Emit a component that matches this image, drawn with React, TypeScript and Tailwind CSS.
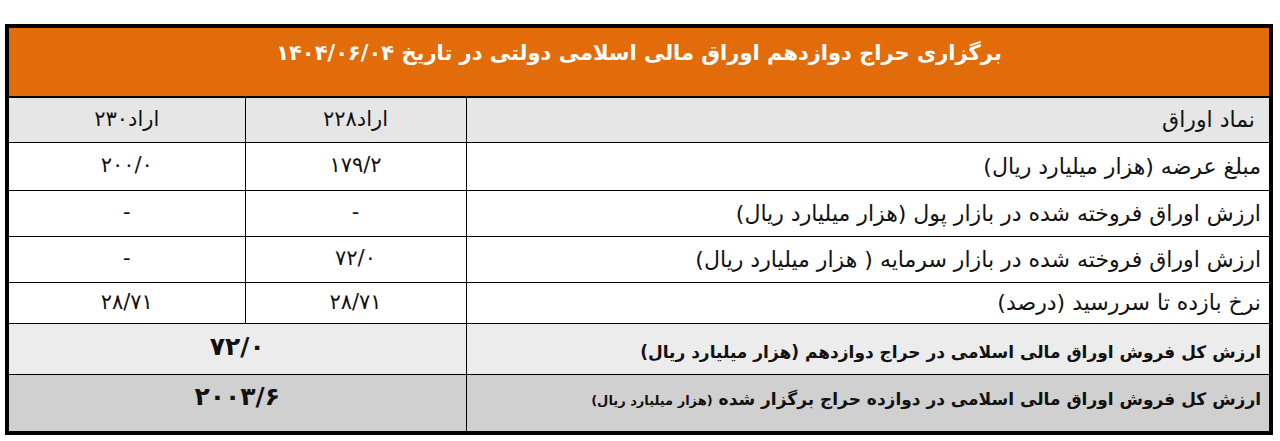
// Auction results table — twelfth Islamic treasury auction, RTL layout.
const FONT = "font-['DejaVu_Sans',sans-serif]";

interface Row {
  label:  string;
  a228:   string;
  a230:   string;
  height: string;
}

const ROWS: Row[] = [
  { label: 'مبلغ عرضه (هزار میلیارد ریال)',                              a228: '۱۷۹/۲', a230: '۲۰۰/۰', height: 'h-[48px]' },
  { label: 'ارزش اوراق فروخته شده در بازار پول (هزار میلیارد ریال)',       a228: '-',     a230: '-',     height: 'h-[46px]' },
  { label: 'ارزش اوراق فروخته شده در بازار سرمایه ( هزار میلیارد ریال)',   a228: '۷۲/۰',  a230: '-',     height: 'h-[46px]' },
  { label: 'نرخ بازده تا سررسید (درصد)',                                 a228: '۲۸/۷۱', a230: '۲۸/۷۱', height: 'h-[41px]' },
];

export default function App() {
  return (
    <div className={`bg-white px-[5px] pt-[24px] ${FONT}`}>
      <table dir="rtl" className="w-[1268px] border-collapse border-[4px] border-black text-[#111]">
        <colgroup>
          <col className="w-[805px]" />
          <col className="w-[221px]" />
          <col />
        </colgroup>
        <tbody>
          <tr className="h-[71px] bg-[#e26b0a]">
            <td colSpan={3} className="border-b-2 border-black pb-[16px] text-center text-[21px] font-bold text-white">
              برگزاری حراج دوازدهم اوراق مالی اسلامی دولتی در تاریخ ۱۴۰۴/۰۶/۰۴
            </td>
          </tr>
          <tr className="h-[45px] bg-[#e6e6e6] text-[22px]">
            <td className="border border-black pr-[14px] text-right">نماد اوراق</td>
            <td className="border border-black text-center text-[21px]">اراد۲۲۸</td>
            <td className="border border-black text-center text-[21px]">اراد۲۳۰</td>
          </tr>
          {ROWS.map((r) => (
            <tr key={r.label} className={`${r.height} bg-white text-[22px]`}>
              <td className="border border-black pr-[8px] text-right">{r.label}</td>
              <td className="border border-black text-center text-[21px]">{r.a228}</td>
              <td className="border border-black text-center text-[21px]">{r.a230}</td>
            </tr>
          ))}
          <tr className="h-[51px] bg-[#ececec]">
            <td className="border border-black pr-[8px] pt-[8px] text-right text-[17px] font-bold">
              ارزش کل فروش اوراق مالی اسلامی در حراج دوازدهم (هزار میلیارد ریال)
            </td>
            <td colSpan={2} className="border border-black pb-[4px] text-center text-[25px] font-bold">۷۲/۰</td>
          </tr>
          <tr className="h-[59px] bg-[#d0d0d0]">
            <td className="border border-black pr-[8px] pb-[6px] text-right text-[17px] font-bold">
              ارزش کل فروش اوراق مالی اسلامی در دوازده حراج برگزار شده{' '}
              <span className="text-[13px]">(هزار میلیارد ریال)</span>
            </td>
            <td colSpan={2} className="border border-black pb-[12px] text-center text-[25px] font-bold">۲۰۰۳/۶</td>
          </tr>
        </tbody>
      </table>
    </div>
  );
}
